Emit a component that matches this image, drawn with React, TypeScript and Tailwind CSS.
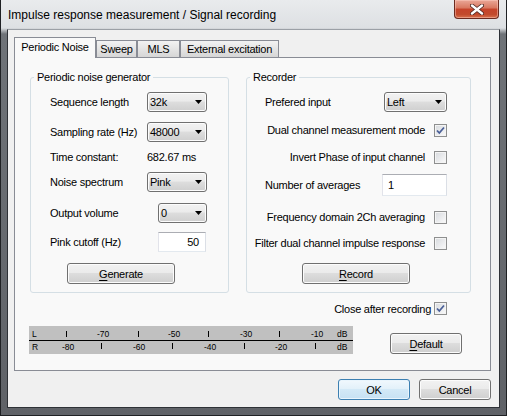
import React from "react";

const FONT = "font-['Liberation_Sans',Arial,sans-serif]";
const BTN_BG =
  "border-[#707070] bg-[linear-gradient(#f2f2f2_0%,#ebebeb_45%,#dddddd_50%,#cfcfcf_100%)] shadow-[inset_0_0_0_1px_#fcfcfc]";

function Mnemonic({ label, ul }: { label: string; ul?: boolean }) {
  if (!ul) return <span>{label}</span>;
  return (
    <span>
      <span className="underline underline-offset-[2px]">{label.slice(0, 1)}</span>
      {label.slice(1)}
    </span>
  );
}

function Button({
  label,
  ul,
  primary,
  className = "",
}: {
  label: string;
  ul?: boolean;
  primary?: boolean;
  className?: string;
}) {
  return (
    <div
      className={`flex h-[21px] shrink-0 items-center justify-center rounded-[3px] border leading-[14px] ${
        primary
          ? "border-[#3c7fb1] bg-[linear-gradient(#f1f8fd_0%,#e3f1fa_45%,#d3e9f7_50%,#c6e1f3_100%)] shadow-[inset_0_0_0_1px_#e9f5fd]"
          : BTN_BG
      } ${className}`}
    >
      <Mnemonic label={label} ul={ul} />
    </div>
  );
}

function Combo({ value, className = "" }: { value: string; className?: string }) {
  return (
    <div
      className={`flex h-[20px] shrink-0 items-center justify-between rounded-[3px] border pl-[2px] pr-[4px] leading-[14px] ${BTN_BG} ${className}`}
    >
      <span>{value}</span>
      <svg width="7" height="4" viewBox="0 0 7 4">
        <path d="M0 0h7L3.5 4z" fill="#000" />
      </svg>
    </div>
  );
}

function Edit({ value, className = "" }: { value: string; className?: string }) {
  return (
    <div
      className={`flex shrink-0 items-center border border-[#abadb3] border-b-[#e3e9ef] border-l-[#e2e3ea] border-r-[#dbdfe6] bg-white leading-[14px] ${className}`}
    >
      {value}
    </div>
  );
}

function Check({ checked }: { checked?: boolean }) {
  return (
    <div className="flex h-[13px] w-[13px] shrink-0 items-center justify-center border border-[#8e8f8f] bg-[linear-gradient(135deg,#d6d9dd,#fbfbfb)] shadow-[inset_0_0_0_1px_#f4f4f4]">
      {checked && (
        <svg width="11" height="11" viewBox="0 0 11 11">
          <path d="M2 5.5 L4.3 8 L9 2.5" fill="none" stroke="#4a5f97" strokeWidth="1.8" />
        </svg>
      )}
    </div>
  );
}

function CheckRow({ label, checked, className = "" }: { label: string; checked?: boolean; className?: string }) {
  return (
    <div className={`flex h-[20px] items-center justify-end gap-[9px] whitespace-nowrap leading-[14px] ${className}`}>
      <span>{label}</span>
      <Check checked={checked} />
    </div>
  );
}

function Row({ label, children, className = "" }: { label: string; children: React.ReactNode; className?: string }) {
  return (
    <div className={`flex h-[20px] items-center justify-between whitespace-nowrap leading-[14px] ${className}`}>
      <span>{label}</span>
      {children}
    </div>
  );
}

const topTicks = [37, 109, 179, 250];
const topLabels = [
  { x: 68, t: "-70" },
  { x: 139, t: "-50" },
  { x: 211, t: "-30" },
  { x: 282, t: "-10" },
];
const bottomTicks = [72, 143, 215, 286];
const bottomLabels = [
  { x: 33, t: "-80" },
  { x: 104, t: "-60" },
  { x: 175, t: "-40" },
  { x: 246, t: "-20" },
];

function LevelMeter() {
  return (
    <svg width="324" height="28" viewBox="0 0 324 28" className="shrink-0 tracking-normal">
      <rect width="324" height="28" fill="#c0c0c0" />
      <rect y="14" width="324" height="1" fill="#000" />
      <g fontFamily="Liberation Sans, Arial, sans-serif" fontSize="8.5" fill="#000">
        <text x="3" y="11">L</text>
        <text x="3" y="24">R</text>
        <text x="308" y="11">dB</text>
        <text x="308" y="24">dB</text>
        {topLabels.map((l) => (
          <text key={l.t} x={l.x} y="11">
            {l.t}
          </text>
        ))}
        {bottomLabels.map((l) => (
          <text key={l.t} x={l.x} y="24">
            {l.t}
          </text>
        ))}
      </g>
      {topTicks.map((x) => (
        <rect key={"t" + x} x={x} y="5" width="1" height="6" fill="#000" />
      ))}
      {bottomTicks.map((x) => (
        <rect key={"b" + x} x={x} y="17" width="1" height="6" fill="#000" />
      ))}
    </svg>
  );
}

function CloseButton() {
  return (
    <div className="mr-[7px] flex h-[19px] w-[45px] items-center justify-center rounded-b-[4px] border border-t-0 border-[#6b2a1f] bg-[linear-gradient(#eaa797_0%,#d8775f_45%,#c6432a_50%,#c24a2c_80%,#d8714d_100%)] shadow-[inset_0_0_0_1px_rgba(255,210,200,0.45)]">
      <svg width="14" height="11" viewBox="0 0 14 11">
        <path d="M2 1.5 L12 9.5 M12 1.5 L2 9.5" stroke="#4b2520" strokeWidth="4" strokeLinecap="round" />
        <path d="M2 1.5 L12 9.5 M12 1.5 L2 9.5" stroke="#fff" strokeWidth="2.4" strokeLinecap="round" />
      </svg>
    </div>
  );
}

function Tab({ label, w }: { label: string; w: string }) {
  return (
    <div
      className={`flex h-[17px] justify-center border border-b-0 border-[#898c95] bg-[linear-gradient(#f2f2f2,#e4e4e4_50%,#d6d6d6)] pt-[1px] leading-[14px] ${w}`}
    >
      {label}
    </div>
  );
}

export default function App() {
  return (
    <div
      className={`${FONT} flex h-[416px] w-[507px] flex-col overflow-hidden border-x border-b border-[#1f2124] bg-[linear-gradient(#e9ebed_0px,#dde0e3_28px,#6f7378_34px,#5f6267_100%)] text-[11px] tracking-[-0.25px] text-black`}
    >
      <div className="flex h-[29px] shrink-0 items-start justify-between">
        <span className="pl-[7px] pt-[8px] text-[12px] leading-[14px] tracking-normal">
          Impulse response measurement / Signal recording
        </span>
        <CloseButton />
      </div>

      <div className="mx-[6px] mb-[7px] flex flex-1 flex-col border border-[#2e3136] border-t-[#9ba0a6] bg-[#f0f0f0] pl-[6px] pt-[7px]">
        <div className="flex h-[20px] items-end">
          <div className="relative z-10 -mb-px flex h-[21px] w-[82px] justify-center border border-b-0 border-[#898c95] bg-[#f9f9f9] pt-[2px] leading-[14px]">
            Periodic Noise
          </div>
          <Tab label="Sweep" w="w-[41px]" />
          <Tab label="MLS" w="w-[43px]" />
          <Tab label="External excitation" w="w-[99px]" />
        </div>

        <div className="flex h-[314px] w-[477px] flex-col border border-[#898c95] bg-[#f9f9f9]">
          <div className="flex gap-[17px] pl-[15px] pt-[12px]">
            <fieldset className="h-[223px] w-[199px] min-w-0 shrink-0 rounded-[3px] border border-[#d5dfe5]">
              <legend className="ml-[3px] px-[3px] leading-[14px]">Periodic noise generator</legend>
              <div className="flex flex-col pl-[19px] pr-[21px] pt-[8px]">
                <Row label="Sequence length">
                  <Combo value="32k" className="w-[60px]" />
                </Row>
                <Row label="Sampling rate (Hz)" className="mt-[10px]">
                  <Combo value="48000" className="w-[60px]" />
                </Row>
                <div className="mt-[5px] flex h-[20px] items-center whitespace-nowrap leading-[14px]">
                  <span className="w-[97px]">Time constant:</span>
                  <span>682.67 ms</span>
                </div>
                <Row label="Noise spectrum" className="mt-[5px]">
                  <Combo value="Pink" className="w-[60px]" />
                </Row>
                <Row label="Output volume" className="mt-[11px]">
                  <Combo value="0" className="w-[49px]" />
                </Row>
                <Row label="Pink cutoff (Hz)" className="mt-[9px]">
                  <Edit value="50" className="mr-px h-[20px] w-[48px] justify-end pr-[6px]" />
                </Row>
                <Button label="Generate" ul className="ml-[17px] mt-[11px] w-[108px]" />
              </div>
            </fieldset>

            <fieldset className="h-[223px] w-[225px] min-w-0 shrink-0 rounded-[3px] border border-[#d5dfe5]">
              <legend className="ml-[3px] px-[3px] leading-[14px]">Recorder</legend>
              <div className="flex flex-col pl-[18px] pr-[23px] pt-[8px]">
                <Row label="Prefered input">
                  <Combo value="Left" className="w-[63px]" />
                </Row>
                <CheckRow label="Dual channel measurement mode" checked className="mt-[8px]" />
                <CheckRow label="Invert Phase of input channel" className="mt-[7px]" />
                <div className="mt-[7px] flex h-[22px] items-center justify-between whitespace-nowrap leading-[14px]">
                  <span>Number of averages</span>
                  <Edit value="1" className="h-[22px] w-[65px] pl-[5px]" />
                </div>
                <CheckRow label="Frequency domain 2Ch averaging" className="mt-[11px]" />
                <CheckRow label="Filter dual channel impulse response" className="mt-[6px]" />
                <Button label="Record" ul className="ml-[37px] mt-[10px] w-[108px]" />
              </div>
            </fieldset>
          </div>

          <div className="mt-[9px] flex h-[13px] items-center justify-end gap-[3px] pr-[43px] leading-[14px]">
            <span>Close after recording</span>
            <Check checked />
          </div>

          <div className="mt-[11px] flex items-start pl-[14px]">
            <LevelMeter />
            <Button label="Default" ul className="ml-[37px] mt-[7px] w-[72px]" />
          </div>
        </div>

        <div className="mt-[8px] flex w-[477px] justify-end gap-[9px]">
          <Button label="OK" primary className="w-[72px]" />
          <Button label="Cancel" className="w-[72px]" />
        </div>
      </div>
    </div>
  );
}
